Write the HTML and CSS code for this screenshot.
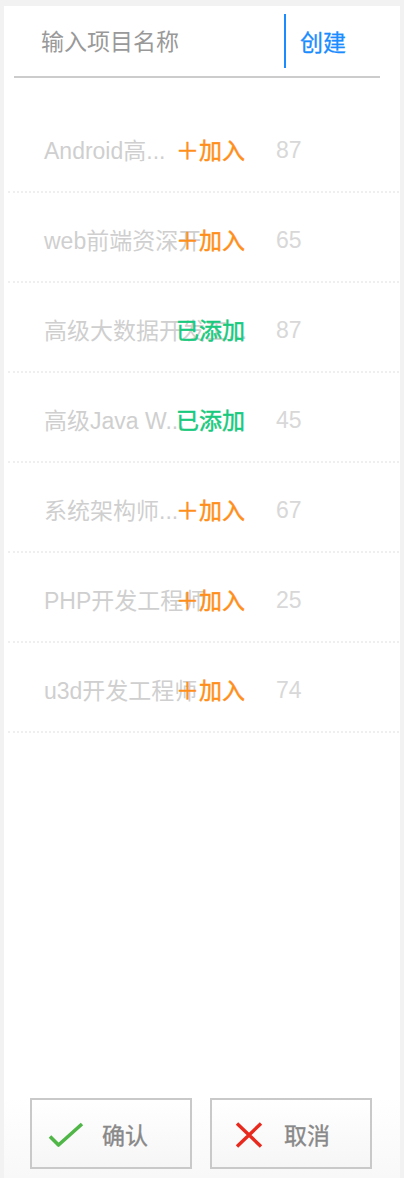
FILE: index.html
```html
<!DOCTYPE html>
<html lang="zh">
<head>
<meta charset="utf-8">
<title>项目选择</title>
<link rel="stylesheet" href="styles.css">
</head>
<body>
<div class="panel">
  <div class="search">
    <input class="search-input" type="text" placeholder="输入项目名称">
    <span class="divider"></span>
    <span class="create">创建</span>
  </div>
  <ul class="list">
    <li class="row"><span class="name">Android高...</span><span class="action join">＋加入</span><span class="count">87</span></li>
    <li class="row"><span class="name">web前端资深开</span><span class="action join">＋加入</span><span class="count">65</span></li>
    <li class="row"><span class="name">高级大数据开发工...</span><span class="action added">已添加</span><span class="count">87</span></li>
    <li class="row"><span class="name">高级Java W...</span><span class="action added">已添加</span><span class="count">45</span></li>
    <li class="row"><span class="name">系统架构师...</span><span class="action join">＋加入</span><span class="count">67</span></li>
    <li class="row"><span class="name">PHP开发工程师</span><span class="action join">＋加入</span><span class="count">25</span></li>
    <li class="row"><span class="name">u3d开发工程师</span><span class="action join">＋加入</span><span class="count">74</span></li>
  </ul>
  <div class="footer">
    <button class="btn" type="button">
      <svg class="icon icon-ok" width="36" height="28" viewBox="0 0 36 28"><path d="M2 16.5 L10.5 25 L34 4" fill="none" stroke="#50b648" stroke-width="3.6" stroke-linejoin="round"/></svg>
      <span class="btn-text">确认</span>
    </button>
    <button class="btn" type="button">
      <svg class="icon icon-cancel" width="38" height="28" viewBox="0 0 38 28"><path d="M9 3.5 L33 26.5 M33 3.5 L9 26.5" fill="none" stroke="#e8291d" stroke-width="3.4"/></svg>
      <span class="btn-text">取消</span>
    </button>
  </div>
</div>
</body>
</html>
```

FILE: styles.css
```css
* {
  box-sizing: border-box;
}

html, body {
  margin: 0;
  padding: 0;
}

body {
  background: #f2f2f2;
  font-family: "Liberation Sans", "Noto Sans CJK SC", sans-serif;
  font-size: 23px;
}

.panel {
  margin: 6px 4px 0 4px;
  height: 1172px;
  background: #fff;
  display: flex;
  flex-direction: column;
}

.search {
  display: flex;
  align-items: center;
  margin: 0 20px 0 10px;
  padding: 8px 0;
  border-bottom: 2px solid #cccccc;
}

.search-input {
  flex: 1;
  min-width: 0;
  border: none;
  outline: none;
  background: transparent;
  padding: 2px 0 0 27px;
  margin: 0;
  font-family: inherit;
  font-size: 23px;
  color: #333;
}

.search-input::placeholder {
  color: #999999;
}

.divider {
  width: 2px;
  height: 54px;
  background: #1a8cff;
}

.create {
  width: 94px;
  padding-left: 14px;
  color: #1a8cff;
  -webkit-text-stroke: 0.3px #1a8cff;
}

.list {
  list-style: none;
  margin: 25px 1px 0 4px;
  padding: 0;
  flex: 1;
}

.row {
  display: flex;
  align-items: center;
  height: 90px;
  padding-top: 4px;
  border-bottom: 2px dotted #efefef;
  white-space: nowrap;
}

.name {
  width: 170px;
  padding-left: 36px;
  color: #cfcfcf;
  overflow: visible;
}

.action {
  width: 98px;
}

.join {
  color: #ff8f1a;
  -webkit-text-stroke: 0.45px #ff8f1a;
  margin-left: -2px;
  width: 100px;
}

.added {
  color: #19c97d;
  -webkit-text-stroke: 0.45px #19c97d;
  margin-left: -2px;
  width: 100px;
}

.count {
  color: #d8d8d8;
  padding-top: 3px;
}

.footer {
  display: flex;
  gap: 18px;
  padding: 0 0 9px 26px;
  background: linear-gradient(to bottom, #ffffff, #f8f8f8);
}

.btn {
  width: 162px;
  height: 71px;
  border: 2px solid #c9c9c9;
  background: linear-gradient(to bottom, #ffffff, #f6f6f6);
  display: flex;
  align-items: center;
  padding: 0 0 0 16px;
  margin: 0;
  font-family: inherit;
  font-size: 23px;
  color: #888888;
  cursor: pointer;
}

.icon {
  display: block;
  flex: none;
}

.btn-text {
  margin-left: 18px;
  -webkit-text-stroke: 0.35px #888888;
}
```
